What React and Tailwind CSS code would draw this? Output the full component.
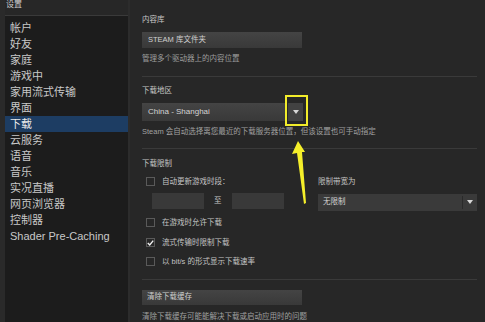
const font = { fontFamily: '"Liberation Sans", "Noto Sans CJK SC", sans-serif' };

const navItems = [
  "帐户",
  "好友",
  "家庭",
  "游戏中",
  "家用流式传输",
  "界面",
  "下载",
  "云服务",
  "语音",
  "音乐",
  "实况直播",
  "网页浏览器",
  "控制器",
  "Shader Pre-Caching",
];

function Caret() {
  return (
    <svg width="6" height="4" viewBox="0 0 6 4">
      <path d="M0 0 L6 0 L3 4 Z" fill="#d8d8d8" />
    </svg>
  );
}

function CheckRow({ label, checked }) {
  return (
    <div className="flex h-[10px] items-center">
      <div className="ml-[4px] flex h-[9px] w-[9px] items-center justify-center border border-[#5a5a5a]">
        {checked && (
          <svg width="9" height="8" viewBox="0 0 9 8">
            <path d="M1 4 L3.5 6.5 L8 1" stroke="#f2f2f2" strokeWidth="1.8" fill="none" />
          </svg>
        )}
      </div>
      <span className="ml-[7px] text-[7.5px] leading-[10px] text-[#c4c4c4]">{label}</span>
    </div>
  );
}

export default function App() {
  return (
    <div className="relative flex h-[322px] w-[485px] overflow-hidden bg-[#272727]" style={font}>
      {/* left strip + sidebar */}
      <div className="w-[5px] bg-[#2a2a2a]" />
      <div className="flex w-[123px] flex-col">
        <div className="relative h-[15px]">
          <span className="absolute left-[1px] top-0 text-[8px] leading-[9px] text-[#cfcfcf]">设置</span>
        </div>
        <div className="flex flex-1 flex-col border-t border-[#3a3a3a] bg-[#1c1c1c] pt-[4px]">
          {navItems.map((item) => (
            <div
              key={item}
              className={`flex h-[16px] items-center pl-[5px] text-[11px] leading-[16px] ${
                item === "下载" ? "bg-[#1d3d63] text-[#eaeaea]" : "text-[#c8c8c8]"
              }`}
            >
              {item}
            </div>
          ))}
        </div>
      </div>
      <div className="w-[2px] bg-[#2c2c2c]" />

      {/* content */}
      <div className="flex flex-1 flex-col pl-[12px] pr-[8px] pt-[15px] text-[7.5px] leading-[10px]">
        <div className="h-[10px] text-[#c8c8c8]">内容库</div>
        <div className="mt-[7px] flex h-[17px] w-[160px] items-center bg-gradient-to-b from-[#444] to-[#393939] pl-[6px] text-[#d0d0d0]">
          STEAM 库文件夹
        </div>
        <div className="mt-[6px] h-[10px] text-[#9e9e9e]">管理多个驱动器上的内容位置</div>
        <div className="mt-[12px] h-px bg-[#3a3a3a]" />

        <div className="mt-[9px] h-[10px] text-[#c8c8c8]">下载地区</div>
        <div className="mt-[7px] flex h-[18px] w-[161px]">
          <div className="flex flex-1 items-center bg-gradient-to-b from-[#444] to-[#393939] pl-[6px] text-[8px] text-[#d4d4d4]">
            China - Shanghai
          </div>
          <div className="ml-[2px] flex w-[15px] items-center justify-center bg-[#424242]">
            <Caret />
          </div>
        </div>
        <div className="mt-[6px] h-[10px] whitespace-nowrap text-[#a0a0a0]">
          Steam 会自动选择离您最近的下载服务器位置，但该设置也可手动指定
        </div>
        <div className="mt-[11px] h-px bg-[#3a3a3a]" />

        <div className="mt-[10px] h-[10px] text-[#c8c8c8]">下载限制</div>
        <div className="mt-[8px] flex">
          <div className="flex w-[176px] flex-col">
            <CheckRow label="自动更新游戏时段：" />
            <div className="mt-[6px] flex h-[16px] items-center">
              <div className="ml-[10px] h-full w-[52px] bg-[#393939]" />
              <span className="mx-[10px] text-[#c4c4c4]">至</span>
              <div className="h-full w-[52px] bg-[#393939]" />
            </div>
            <div className="mt-[9px]">
              <CheckRow label="在游戏时允许下载" />
            </div>
            <div className="mt-[10px]">
              <CheckRow label="流式传输时限制下载" checked />
            </div>
            <div className="mt-[9px]">
              <CheckRow label="以 bit/s 的形式显示下载速率" />
            </div>
          </div>
          <div className="flex flex-1 flex-col">
            <div className="h-[10px] text-[#c4c4c4]">限制带宽为</div>
            <div className="mt-[7px] flex h-[17px] w-[159px] bg-[#3a3a3a]">
              <div className="flex flex-1 items-center pl-[5px] text-[#d4d4d4]">无限制</div>
              <div className="my-[2px] w-px bg-[#2a2a2a]" />
              <div className="flex w-[14px] items-center justify-center">
                <Caret />
              </div>
            </div>
          </div>
        </div>
        <div className="mt-[12px] h-px bg-[#3a3a3a]" />

        <div className="mt-[10px] flex h-[16px] w-[160px] items-center bg-gradient-to-b from-[#444] to-[#393939] pl-[5px] text-[#d0d0d0]">
          清除下载缓存
        </div>
        <div className="mt-[7px] h-[10px] whitespace-nowrap text-[#a0a0a0]">
          清除下载缓存可能能解决下载或启动应用时的问题
        </div>
      </div>

      {/* annotation overlay */}
      <div className="absolute left-[285px] top-[95px] h-[31px] w-[23px] border-2 border-[#f2ec2a]" />
      <svg className="absolute left-0 top-0" width="485" height="322" viewBox="0 0 485 322">
        <polygon points="298,141 292,154 297,153 304,204 306,203 302,152 305,152" fill="#f5ef2a" />
      </svg>
    </div>
  );
}
